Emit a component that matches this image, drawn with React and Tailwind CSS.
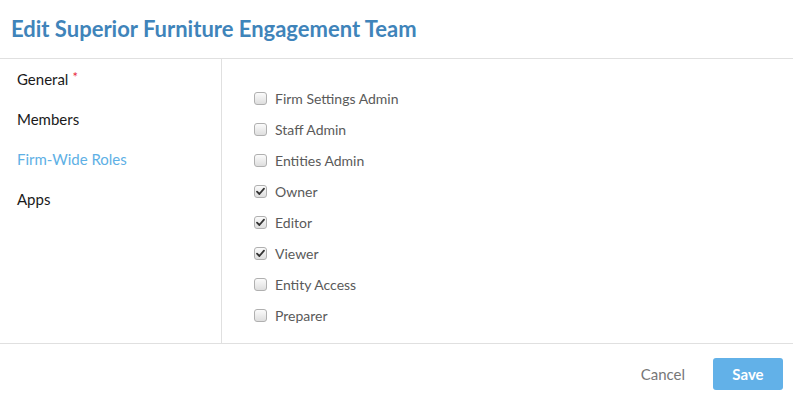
import React, { useState } from "react";

const navItems = [
  { label: "General", required: true },
  { label: "Members" },
  { label: "Firm-Wide Roles", active: true },
  { label: "Apps" },
];

const initialRoles = [
  { name: "Firm Settings Admin", checked: false },
  { name: "Staff Admin", checked: false },
  { name: "Entities Admin", checked: false },
  { name: "Owner", checked: true },
  { name: "Editor", checked: true },
  { name: "Viewer", checked: true },
  { name: "Entity Access", checked: false },
  { name: "Preparer", checked: false },
];

const Checkbox = ({ checked }) => (
  <span className="flex items-center justify-center w-[13px] h-[13px] rounded-[3px] border border-[#b0b0b0] bg-gradient-to-b from-[#fbfbfb] to-[#dedede]">
    {checked && (
      <svg width="9" height="9" viewBox="0 0 9 9">
        <path d="M1 4.6 L3.4 7 L8 1.6" fill="none" stroke="#333" strokeWidth="1.8" strokeLinecap="round" strokeLinejoin="round" />
      </svg>
    )}
  </span>
);

const App = () => {
  const [roles, setRoles] = useState(initialRoles);

  const toggle = (i) => {
    setRoles(roles.map((r, idx) => (idx === i ? { ...r, checked: !r.checked } : r)));
  };

  return (
    <div className="w-[793px] h-[404px] bg-white flex flex-col font-['Lato',sans-serif]">
      {/* Header */}
      <div className="h-[59px] border-b border-[#e0e0e0] flex items-center px-[11px]">
        <h1 className="text-[22px] font-bold text-[#3f84ba] leading-none pb-[1px]">
          Edit Superior Furniture Engagement Team
        </h1>
      </div>

      {/* Body */}
      <div className="h-[285px] flex border-b border-[#e0e0e0]">
        <div className="w-[222px] border-r border-[#e0e0e0] flex flex-col">
          {navItems.map((item) => (
            <div
              key={item.label}
              className={`h-[40px] flex items-center pl-[17px] text-[15px] ${
                item.active ? "text-[#5eb0e5]" : "text-[#1a1a1a]"
              }`}
            >
              {item.label}
              {item.required && <span className="text-[#e8283c] ml-[4px] text-[13px] -mt-[3px]">*</span>}
            </div>
          ))}
        </div>

        <div className="flex-1 flex flex-col pt-[24px] pl-[32px]">
          {roles.map((role, i) => (
            <label
              key={role.name}
              onClick={() => toggle(i)}
              className="h-[31px] flex items-center gap-[8px] text-[14px] text-[#5a5a5a] cursor-pointer"
            >
              <Checkbox checked={role.checked} />
              <span>{role.name}</span>
            </label>
          ))}
        </div>
      </div>

      {/* Footer */}
      <div className="flex-1 flex items-center justify-end pr-[10px] gap-[28px]">
        <button className="text-[15px] text-[#777]">Cancel</button>
        <button className="w-[70px] h-[32px] rounded-[3px] bg-[#62b1e8] text-white text-[15px] font-bold">
          Save
        </button>
      </div>
    </div>
  );
};

export default App;
